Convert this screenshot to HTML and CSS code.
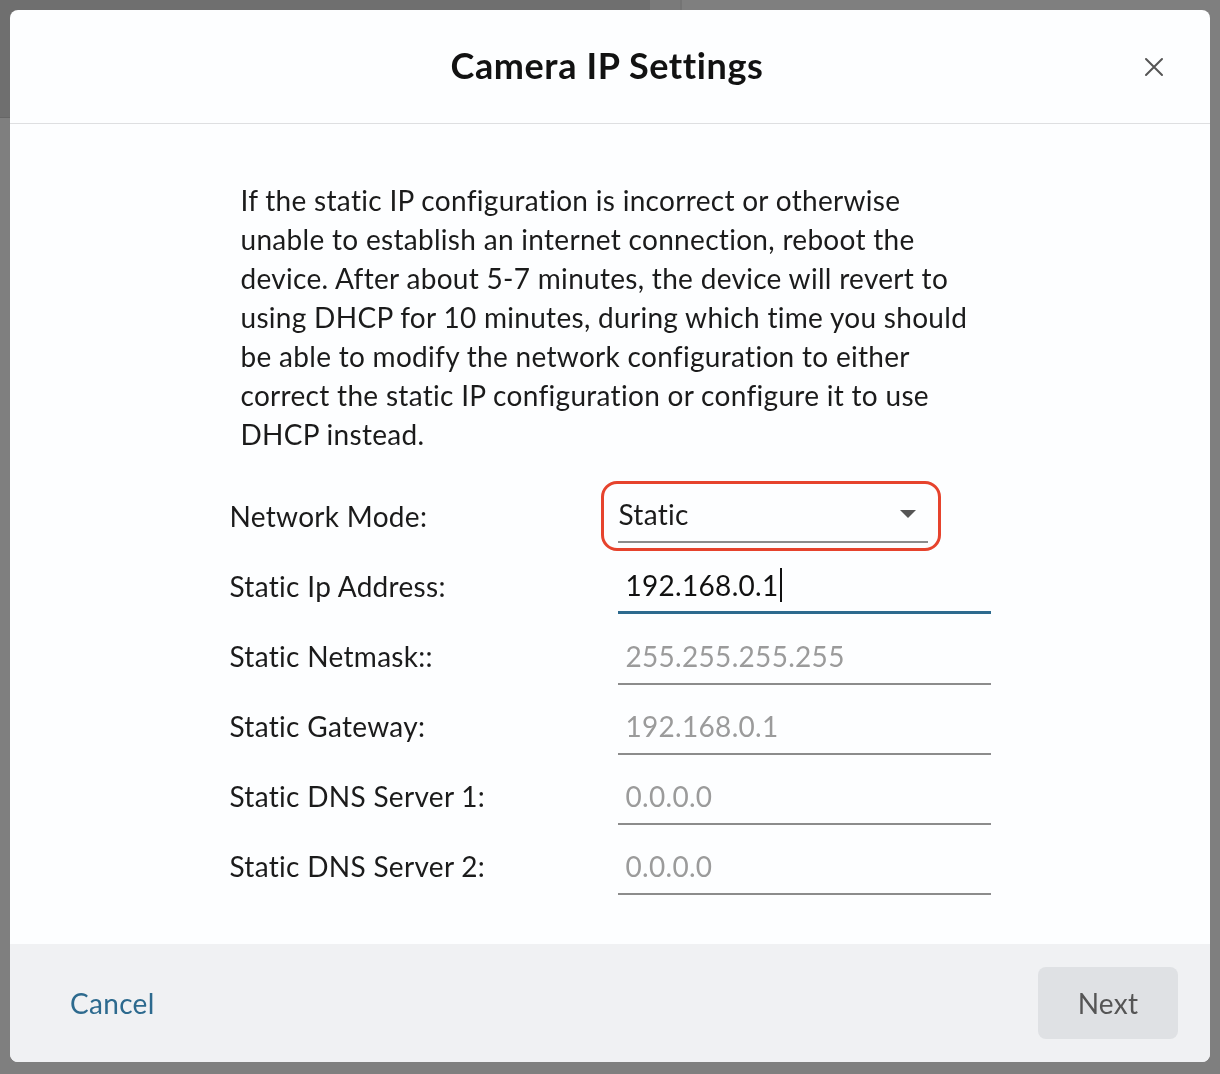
FILE: index.html
```html
<!DOCTYPE html>
<html lang="en">
<head>
  <meta charset="UTF-8" />
  <title>Camera IP Settings</title>
  <link rel="stylesheet" href="styles.css">
</head>
<body>
  <div class="page-behind">
    <div class="behind-header"></div>
    <div class="behind-side"></div>
  </div>

  <div class="modal">
    <div class="modal-header">
      <span></span>
      <h2>Camera IP Settings</h2>
      <button class="close-btn" aria-label="Close">
        <svg width="20" height="20" viewBox="0 0 20 20"><path d="M2 2 L18 18 M18 2 L2 18" stroke="#555" stroke-width="2" stroke-linecap="round"/></svg>
      </button>
    </div>

    <div class="modal-body">
      <p class="notice">If the static IP configuration is incorrect or otherwise unable to establish an internet connection, reboot the device. After about 5-7 minutes, the device will revert to using DHCP for 10 minutes, during which time you should be able to modify the network configuration to either correct the static IP configuration or configure it to use DHCP instead.</p>

      <div class="form">
        <div class="row">
          <label>Network Mode:</label>
          <div class="focus-ring">
            <div class="select">
              <span>Static</span>
              <span class="arrow"></span>
            </div>
          </div>
        </div>
        <div class="row">
          <label>Static Ip Address:</label>
          <div class="field active">192.168.0.1<span class="caret"></span></div>
        </div>
        <div class="row">
          <label>Static Netmask::</label>
          <div class="field placeholder">255.255.255.255</div>
        </div>
        <div class="row">
          <label>Static Gateway:</label>
          <div class="field placeholder">192.168.0.1</div>
        </div>
        <div class="row">
          <label>Static DNS Server 1:</label>
          <div class="field placeholder">0.0.0.0</div>
        </div>
        <div class="row">
          <label>Static DNS Server 2:</label>
          <div class="field placeholder">0.0.0.0</div>
        </div>
      </div>
    </div>

    <div class="modal-footer">
      <a class="cancel" href="#">Cancel</a>
      <button class="next-btn" disabled>Next</button>
    </div>
  </div>
</body>
</html>
```

FILE: styles.css
```css
* {
  box-sizing: border-box;
  margin: 0;
  padding: 0;
}
body {
  font-family: 'Lato', 'Noto Sans', sans-serif;
  background: #7f7f7f;
  color: #1b1b1b;
  width: 1220px;
  height: 1074px;
  overflow: hidden;
}
.page-behind {
  display: flex;
  height: 118px;
}
.behind-header {
  width: 650px;
  background: #6f6f6f;
  border-bottom: 1px solid #666;
}
.behind-side {
  width: 32px;
  background: #7a7a7a;
  border-right: 2px solid #747474;
}
.modal {
  position: fixed;
  top: 10px;
  left: 10px;
  width: 1200px;
  height: 1052px;
  background: #fdfeff;
  border-radius: 8px;
  overflow: hidden;
  display: flex;
  flex-direction: column;
}
.modal-header {
  display: grid;
  grid-template-columns: 1fr auto 1fr;
  align-items: center;
  height: 114px;
  border-bottom: 1px solid #dedfe1;
  padding: 0 46px 4px 40px;
}
.modal-header h2 {
  font-size: 36px;
  font-weight: 700;
  color: #121212;
  letter-spacing: 0.6px;
}
.close-btn {
  justify-self: end;
  background: none;
  border: none;
  width: 20px;
  height: 20px;
  margin-top: 4px;
  cursor: pointer;
}
.modal-body {
  flex: 1;
  width: 761px;
  margin: 0 auto;
  padding-top: 57px;
  font-size: 28px;
  letter-spacing: 0.3px;
}
.notice {
  line-height: 39px;
  padding: 0 10px 0 11px;
  margin-bottom: 27px;
}
.row {
  display: flex;
  align-items: center;
  height: 70px;
}
.row label {
  width: 388px;
}
.focus-ring {
  margin-left: -17px;
  border: 3px solid #e6432d;
  border-radius: 16px;
  padding: 3px 10px 5px 14px;
  height: 70px;
}
.select {
  width: 310px;
  height: 56px;
  border-bottom: 2px solid #8c8c8c;
  display: flex;
  align-items: center;
  justify-content: space-between;
  padding: 0 12px 0 1px;
}
.arrow {
  width: 0;
  height: 0;
  border-left: 8px solid transparent;
  border-right: 8px solid transparent;
  border-top: 8px solid #555;
}
.field {
  width: 373px;
  height: 56px;
  margin-top: 2px;
  border-bottom: 2px solid #8c8c8c;
  display: flex;
  align-items: center;
  padding-left: 8px;
}
.field.active {
  border-bottom: 3px solid #2d6a8e;
  margin-top: 0;
  color: #111;
}
.caret {
  display: inline-block;
  width: 2px;
  height: 34px;
  background: #111;
  margin-left: 1px;
}
.placeholder {
  color: #9b9b9b;
}
.modal-footer {
  height: 118px;
  background: #f0f1f3;
  display: flex;
  align-items: center;
  justify-content: space-between;
  padding: 0 32px 0 60px;
  font-size: 28px;
  letter-spacing: 0.3px;
}
.cancel {
  color: #2d6a8e;
  text-decoration: none;
}
.next-btn {
  width: 140px;
  height: 72px;
  background: #dfe1e4;
  color: #555;
  border: none;
  border-radius: 8px;
  font-family: inherit;
  font-size: 28px;
  letter-spacing: 0.3px;
}
```
